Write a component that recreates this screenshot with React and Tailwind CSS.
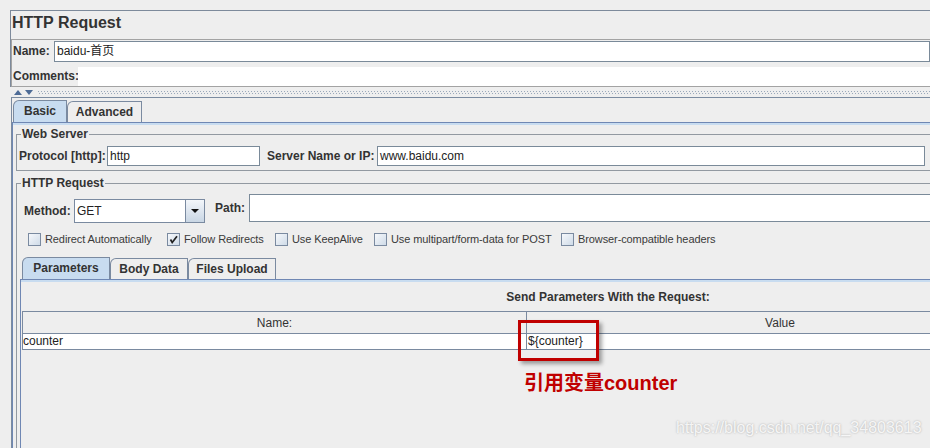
import React from "react";

function Check({ checked }) {
  return (
    <span className="w-[13px] h-[13px] shrink-0 border border-[#7a8aa0] bg-[linear-gradient(135deg,#f6f8fb,#cfdbe8)] flex items-center justify-center">
      {checked && (
        <svg width="9" height="9" viewBox="0 0 9 9">
          <path d="M1.5 4.5 L3.2 7.5 L8 1.2" stroke="#222" strokeWidth="1.7" fill="none" />
        </svg>
      )}
    </span>
  );
}

function Option({ label, checked, w }) {
  return (
    <div className={`flex items-center gap-[4px] ${w}`}>
      <Check checked={checked} />
      <span className="text-[11px] leading-[13px] tracking-[-0.1px] text-[#3a3a3a] whitespace-nowrap">{label}</span>
    </div>
  );
}

function Tab({ label, active, w }) {
  return (
    <div
      className={`${w} ${active ? "h-[22px] bg-[#c8dcf0]" : "h-[21px] bg-[#eeeeee]"} border-t border-l border-r border-[#7a8aa0] rounded-tl-[6px] text-center text-[12px] font-bold leading-[20px] text-[#333]`}
    >
      {label}
    </div>
  );
}

export default function App() {
  return (
    <div className="relative w-[930px] h-[448px] overflow-hidden bg-[#eeeeee] text-[#333] font-['Liberation_Sans','Noto_Sans_CJK_SC',Arial,sans-serif]">
      {/* header block */}
      <div className="pt-[10px] pl-[10px]">
        <div className="border-t border-l border-[#7d8a9b]">
          <div className="h-[28px] pl-[1px] pt-[1px] text-[16px] font-bold leading-[22px]">HTTP Request</div>
          <div className="border-t border-l border-b border-[#a3a3a3]">
            <div className="h-[26px] flex items-start pt-[1px]">
              <span className="w-[42px] shrink-0 pl-[1px] text-[12px] font-bold leading-[21px]">Name:</span>
              <div className="flex-1 h-[21px] bg-white border border-[#7a8a99] pl-[2px] text-[12px] leading-[19px] text-[#222]">
                baidu-首页
              </div>
            </div>
            <div className="h-[20px] flex">
              <span className="w-[66px] shrink-0 pl-[1px] text-[12px] font-bold leading-[20px]">Comments:</span>
              <div className="flex-1 mt-[1px] bg-white" />
            </div>
          </div>
        </div>
      </div>

      {/* split divider */}
      <div className="h-[10px] flex items-center pl-[14px] gap-[3px]">
        <svg width="8" height="5" viewBox="0 0 8 5">
          <path d="M0 5 L4 0 L8 5 Z" fill="#4d6b96" />
        </svg>
        <svg width="8" height="5" viewBox="0 0 8 5">
          <path d="M0 0 L8 0 L4 5 Z" fill="#4d6b96" />
        </svg>
        <div className="flex-1 ml-[2px] flex flex-col gap-[1px]">
          <div className="h-[1px] bg-[repeating-linear-gradient(90deg,#9aa8ba_0_1px,transparent_1px_3px)]" />
          <div className="h-[1px] bg-[repeating-linear-gradient(90deg,transparent_0_1px,#9aa8ba_1px_2px,transparent_2px_3px)]" />
        </div>
      </div>

      {/* main tabbed pane */}
      <div className="ml-[11px] h-[400px] border-t border-l border-[#7b8ba0]">
        <div className="pt-[2px] pl-[1px] flex items-end">
          <Tab label="Basic" active w="w-[54px]" />
          <Tab label="Advanced" w="w-[75px]" />
        </div>
        <div className="h-[360px] border-t border-l border-[#6f87b3]">
          <div className="h-[2px] bg-[#c8dcf0]" />

          {/* Web Server */}
          <fieldset className="ml-[3px] mt-[2px] w-[960px] border border-[#9299a1] pb-[4px]">
            <legend className="ml-[4px] px-[1px] text-[12px] font-bold leading-[14px]">Web Server</legend>
            <div className="mt-[5px] h-[20px] flex items-center">
              <span className="w-[90px] shrink-0 pl-[2px] text-[12px] font-bold">Protocol [http]:</span>
              <div className="w-[153px] h-[20px] bg-white border border-[#7a8a99] pl-[2px] text-[12px] leading-[18px] text-[#222]">http</div>
              <span className="ml-[7px] w-[110px] shrink-0 text-[12px] font-bold">Server Name or IP:</span>
              <div className="w-[548px] h-[20px] bg-white border border-[#7a8a99] pl-[2px] text-[12px] leading-[18px] text-[#222]">
                www.baidu.com
              </div>
            </div>
          </fieldset>

          {/* HTTP Request */}
          <fieldset className="ml-[3px] mt-[5px] w-[960px] h-[300px] border border-[#9299a1]">
            <legend className="ml-[4px] px-[1px] text-[12px] font-bold leading-[14px]">HTTP Request</legend>
            <div className="mt-[4px] flex items-start">
              <span className="mt-[5px] w-[57px] shrink-0 pl-[7px] text-[12px] font-bold leading-[24px]">Method:</span>
              <div className="mt-[5px] w-[131px] h-[24px] flex">
                <div className="w-[111px] bg-white border-t border-l border-b border-[#7a8aa0] pl-[2px] text-[12px] leading-[22px] text-[#222]">GET</div>
                <div className="w-[20px] border border-[#7a8aa0] bg-[linear-gradient(180deg,#f3f6fa,#c9d6e4)] flex items-center justify-center">
                  <svg width="8" height="4" viewBox="0 0 8 4">
                    <path d="M0 0 L8 0 L4 4 Z" fill="#111" />
                  </svg>
                </div>
              </div>
              <span className="ml-[10px] w-[34px] shrink-0 text-[12px] font-bold leading-[28px]">Path:</span>
              <div className="w-[700px] h-[28px] bg-white border border-[#7a8a99]" />
            </div>

            <div className="mt-[10px] pl-[11px] h-[13px] flex items-center">
              <Option label="Redirect Automatically" w="w-[139px]" />
              <Option label="Follow Redirects" checked w="w-[108px]" />
              <Option label="Use KeepAlive" w="w-[99px]" />
              <Option label="Use multipart/form-data for POST" w="w-[187px]" />
              <Option label="Browser-compatible headers" w="w-[200px]" />
            </div>

            {/* inner tabs */}
            <div className="ml-[3px] mt-[11px]">
              <div className="pl-[2px] flex items-end">
                <Tab label="Parameters" active w="w-[88px]" />
                <Tab label="Body Data" w="w-[78px]" />
                <Tab label="Files Upload" w="w-[88px]" />
              </div>
              <div className="h-[200px] border-t border-l border-[#6f87b3]">
                <div className="h-[2px] bg-[#c8dcf0]" />
                <div className="mt-[8px] w-[1174px] text-center text-[12px] font-bold leading-[14px]">
                  Send Parameters With the Request:
                </div>
                <div className="mt-[7px] ml-[1px] w-[1012px] border-t border-l border-[#7a8aa0]">
                  <div className="h-[22px] flex border-b border-[#7a8aa0] text-[12px] text-[#333]">
                    <div className="w-[504px] border-r border-[#7a8aa0] text-center leading-[22px]">Name:</div>
                    <div className="w-[506px] text-center leading-[22px]">Value</div>
                  </div>
                  <div className="h-[16px] flex border-b border-[#7a8aa0] bg-white text-[12px] text-[#222]">
                    <div className="w-[504px] border-r border-[#7a8aa0] leading-[15px]">counter</div>
                    <div className="w-[506px] pl-[1px] leading-[15px]">{"${counter}"}</div>
                  </div>
                </div>
              </div>
            </div>
          </fieldset>
        </div>
      </div>

      {/* annotation */}
      <div className="absolute left-[518px] top-[320px] w-[81px] h-[41px] border-[3px] border-[#c00000] shadow-[3px_3px_4px_rgba(0,0,0,0.35)]" />
      <div className="absolute left-[524px] top-[370px] text-[20px] leading-[26px] font-bold text-[#c00000] whitespace-nowrap">
        引用变量counter
      </div>
      <div className="absolute left-[676px] top-[418px] text-[16px] leading-[20px] text-[rgba(255,255,255,0.85)] [text-shadow:0_0_2px_rgba(120,120,120,0.6)] whitespace-nowrap">
        https://blog.csdn.net/qq_34803613
      </div>
    </div>
  );
}
